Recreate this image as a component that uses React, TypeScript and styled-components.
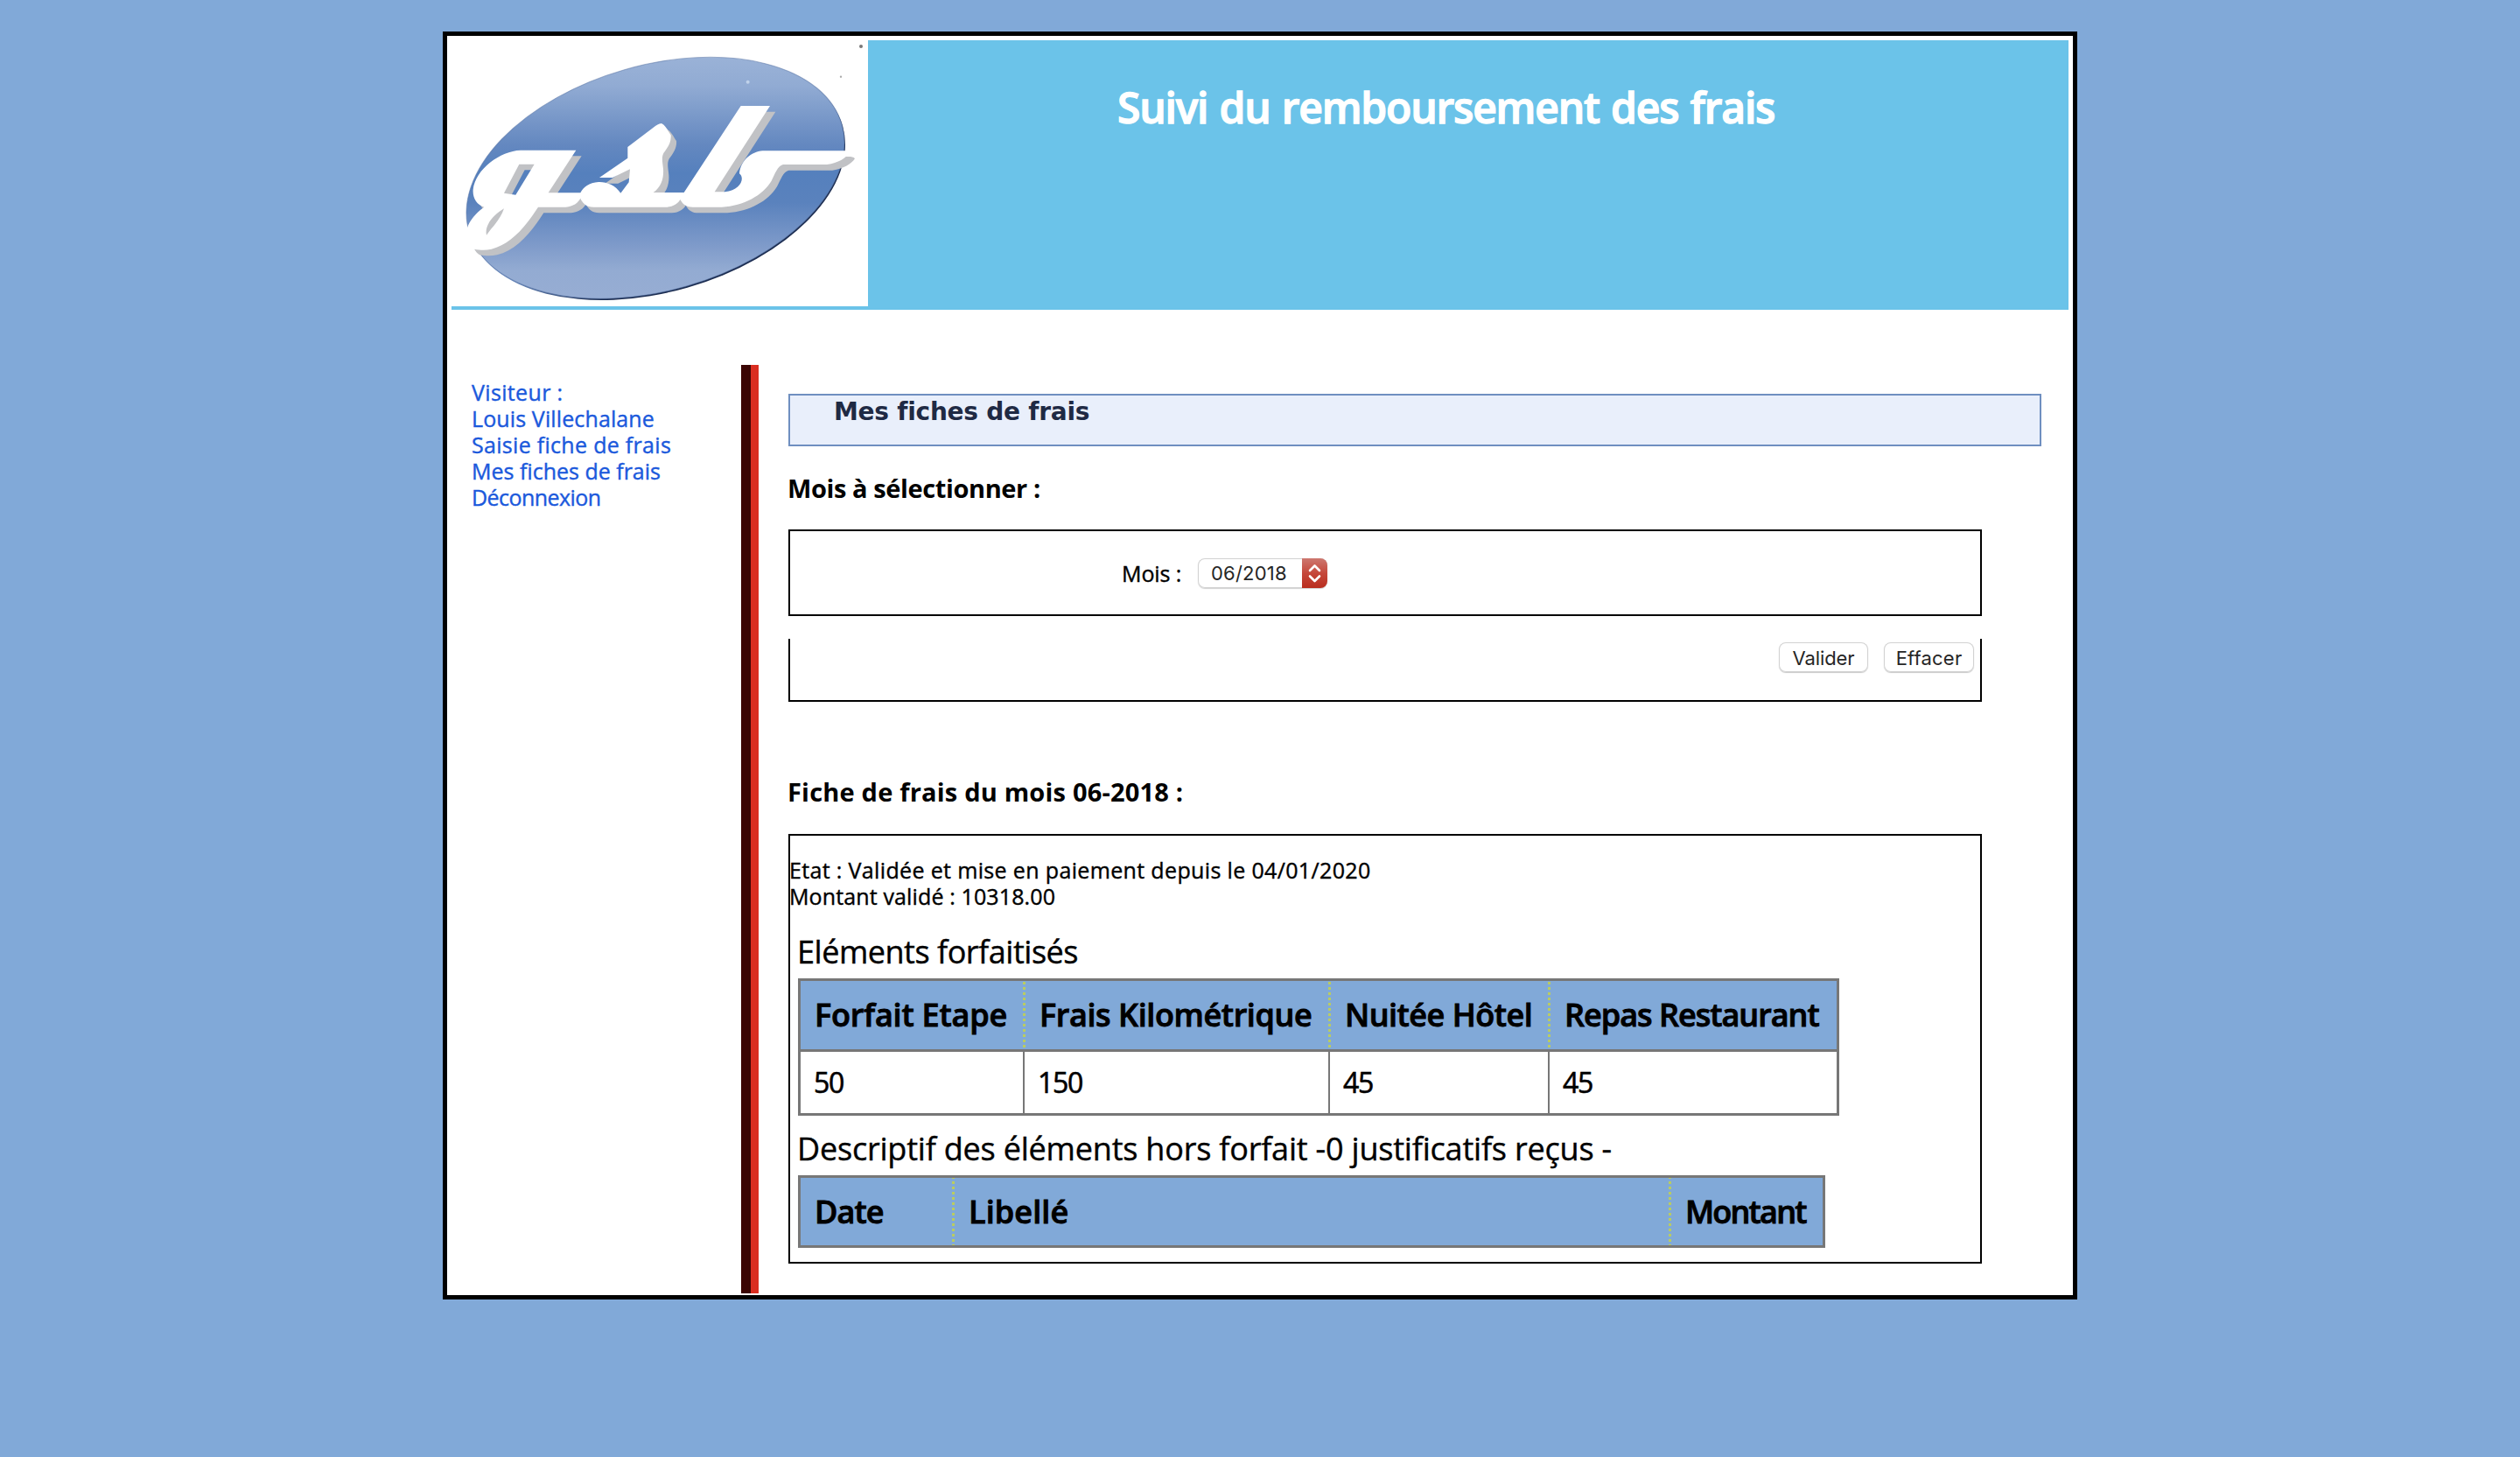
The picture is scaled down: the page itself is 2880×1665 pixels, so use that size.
import React from "react";
import styled, { createGlobalStyle } from "styled-components";

const sans = `"Open Sans", "Noto Sans", sans-serif`;
const system = `Inter, "Liberation Sans", sans-serif`;

const GlobalStyle = createGlobalStyle`
  *, *::before, *::after { box-sizing: border-box; }
  body {
    margin: 0;
    background: #81a9d8;
    color: #000;
    font-family: ${sans};
  }
`;

const Page = styled.div`
  width: 1868px;
  height: 1449px;
  margin: 36px auto 0;
  padding: 5px;
  border: 5px solid #000;
  background: #fff;
`;

const Header = styled.header`
  display: flex;
  align-items: flex-start;
  height: 308px;
  margin-bottom: 63px;
  background: #6bc3e9;
`;

const LogoSvg = styled.svg`
  display: block;
  flex: none;
  width: 476px;
  height: 304px;
  background: #fff;
`;

const SiteTitle = styled.h1`
  margin: 47px 0 0;
  padding-left: 285px;
  color: #fff;
  font-size: 48px;
  line-height: 60px;
  font-weight: 600;
  letter-spacing: -1.2px;
  word-spacing: 2px;
  white-space: nowrap;
  -webkit-text-stroke: 1.3px #fff;
`;

const Columns = styled.div`
  display: flex;
  height: 1061px;
`;

const Sidebar = styled.nav`
  width: 331px;
  padding: 16px 0 0 23px;
`;

const MenuItem = styled.div<{ $spacing: number }>`
  color: #1b59dc;
  font-size: 25px;
  line-height: 30px;
  letter-spacing: ${(p) => p.$spacing}px;
  white-space: nowrap;
  -webkit-text-stroke: 0.4px;
`;

const Divider = styled.div`
  width: 20px;
  border-left: 11px solid #3b0503;
  background: #da2e21;
`;

const Content = styled.main`
  display: flex;
  flex-direction: column;
  padding: 33px 0 0 34px;
`;

const SectionTitle = styled.h2`
  width: 1432px;
  height: 60px;
  margin: 0 0 30px;
  padding: 4px 0 0 50px;
  border: 2px solid #6f8fc0;
  background: #e9effb;
  color: #1f2a44;
  font: 700 28px/30px "DejaVu Sans", Verdana, sans-serif;
  letter-spacing: -0.25px;
`;

const SubTitle = styled.h3<{ $spacing: number }>`
  margin: 0 0 0 -1px;
  font-size: 29px;
  line-height: 36px;
  font-weight: 700;
  letter-spacing: ${(p) => p.$spacing}px;
`;

const MonthBox = styled.div`
  display: flex;
  align-items: flex-start;
  width: 1364px;
  height: 99px;
  margin: 29px 0 26px;
  padding: 31px 0 0 379px;
  border: 2px solid #000;
`;

const Label = styled.label`
  width: 87px;
  margin-top: 2px;
  font-size: 25px;
  line-height: 30px;
  letter-spacing: -0.1px;
  -webkit-text-stroke: 0.4px;
`;

const Select = styled.div`
  display: flex;
  width: 148px;
  height: 34px;
  padding-left: 15px;
  overflow: hidden;
  border-radius: 8px;
  background: #fff;
  box-shadow: inset 0 0 0 1px #d2d2d2, 0 1px 1px rgba(0, 0, 0, 0.18);
  color: #262626;
  font: 22px/34px ${system};
`;

const SelectValue = styled.span`
  flex: 1;
  letter-spacing: 0.2px;
`;

const SelectArrows = styled.svg`
  width: 29px;
  height: 34px;
  background: linear-gradient(#cd7870, #c5483b 50%, #b92d1e);
`;

const ActionsBox = styled.div`
  display: flex;
  align-items: flex-start;
  justify-content: flex-end;
  gap: 18px;
  width: 1364px;
  height: 72px;
  margin-bottom: 85px;
  padding: 4px 7px 0 0;
  border: solid #000;
  border-width: 0 2px 2px;
`;

const Button = styled.button<{ $width: number; $spacing: number }>`
  width: ${(p) => p.$width}px;
  height: 34px;
  padding: 2px 0 0;
  border: 0;
  border-radius: 8px;
  background: #fff;
  box-shadow: inset 0 0 0 1px #d2d2d2, 0 1px 1px rgba(0, 0, 0, 0.22);
  color: #262626;
  font: 22px/32px ${system};
  letter-spacing: ${(p) => p.$spacing}px;
`;

const SheetBox = styled.section`
  display: flex;
  flex-direction: column;
  width: 1364px;
  height: 491px;
  margin-top: 30px;
  padding-top: 24px;
  border: 2px solid #000;
`;

const StateLine = styled.div<{ $spacing: number }>`
  margin-left: -1px;
  font-size: 25px;
  line-height: 30px;
  letter-spacing: ${(p) => p.$spacing}px;
  -webkit-text-stroke: 0.4px;
`;

const Caption = styled.div<{ $top: number; $spacing: number }>`
  margin: ${(p) => p.$top}px 0 8px 8px;
  font-size: 36px;
  line-height: 44px;
  letter-spacing: ${(p) => p.$spacing}px;
  -webkit-text-stroke: 0.4px;
`;

const Table = styled.div<{ $columns: string; $width: number }>`
  display: grid;
  grid-template-columns: ${(p) => p.$columns};
  width: ${(p) => p.$width}px;
  margin-left: 9px;
  border: 3px solid #777;
`;

const HeadCell = styled.div<{ $height: number; $spacing: number; $phase: number }>`
  height: ${(p) => p.$height}px;
  padding-left: 19px;
  background: #81a9d8;
  font-size: 36px;
  line-height: ${(p) => p.$height}px;
  font-weight: 600;
  letter-spacing: ${(p) => p.$spacing}px;
  white-space: nowrap;
  -webkit-text-stroke: 0.9px #000;
  &:not(:first-child) {
    background:
      repeating-linear-gradient(transparent 0 3px, #81a9d8 3px 6px) 0 ${(p) => p.$phase}px / 3px 6px repeat-y,
      linear-gradient(#b9cc62, #b9cc62) 0 0 / 3px 100% no-repeat,
      #81a9d8;
  }
  &:first-child {
    padding-left: 16px;
  }
`;

const BodyCell = styled.div`
  height: 73px;
  padding-left: 17px;
  border-top: 3px solid #777;
  font-size: 32px;
  line-height: 69px;
  letter-spacing: -1.3px;
  -webkit-text-stroke: 0.6px;
  & + & {
    background: linear-gradient(#777, #777) 0 0 / 2px 100% no-repeat;
  }
  ${HeadCell} + & {
    padding-left: 15px;
    background: none;
  }
`;

const menu = [
  { label: "Visiteur :", spacing: 0.35 },
  { label: "Louis Villechalane", spacing: 0.12 },
  { label: "Saisie fiche de frais", spacing: 0.3 },
  { label: "Mes fiches de frais", spacing: 0 },
  { label: "Déconnexion", spacing: -0.55 },
];

const packages = [
  { label: "Forfait Etape", value: "50", spacing: -0.2 },
  { label: "Frais Kilométrique", value: "150", spacing: -0.4 },
  { label: "Nuitée Hôtel", value: "45", spacing: -0.5 },
  { label: "Repas Restaurant", value: "45", spacing: -1 },
];

const extras = [
  { label: "Date", spacing: -0.9 },
  { label: "Libellé", spacing: 0.1 },
  { label: "Montant", spacing: -1.8 },
];

const letters =
  "M475 425H285C215 427 130 490 122 560C120 590 135 612 160 620C130 640 95 680 100 715C102 740 112 755 125 764C150 768 165 768 185 764C250 748 300 690 345 620H440C465 618 482 605 490 590C498 608 512 620 535 620H785C810 618 824 608 832 594C842 612 855 620 875 620H975C1050 615 1115 580 1145 530C1158 505 1165 480 1185 474H1335C1375 468 1400 452 1412 434C1408 428 1400 427 1390 427H1115C1075 430 1040 460 1035 505C1055 520 1040 562 985 568H950L1140 273H1040L845 570H740C768 550 776 520 774 490C772 465 765 445 780 428C792 412 802 395 800 373C790 358 782 340 768 333C758 333 750 340 742 346L652 414V452L555 519H600L660 490L656 535L628 572C610 545 580 533 552 534C520 536 500 552 490 571H380Z" +
  "M280 473L228 572L268 578L332 473Z" +
  "M228 625C195 645 160 680 168 716C185 690 215 665 228 625Z";

function Logo() {
  return (
    <LogoSvg viewBox="48 48 1428 912" preserveAspectRatio="none">
      <defs>
        <linearGradient id="shade" gradientUnits="userSpaceOnUse" x1="0" y1="105" x2="0" y2="937">
          <stop offset="0" stopColor="#9ab2d7" />
          <stop offset="0.12" stopColor="#91abd3" />
          <stop offset="0.36" stopColor="#6488c0" />
          <stop offset="0.48" stopColor="#5580bd" />
          <stop offset="0.6" stopColor="#5a82bd" />
          <stop offset="0.78" stopColor="#7f9bca" />
          <stop offset="0.88" stopColor="#93abd2" />
          <stop offset="1" stopColor="#97add3" />
        </linearGradient>
        <linearGradient id="rim" gradientUnits="userSpaceOnUse" x1="-300" y1="-300" x2="100" y2="300">
          <stop offset="0.35" stopColor="#6d8fc4" />
          <stop offset="0.75" stopColor="#1b2c50" />
        </linearGradient>
        <clipPath id="oval">
          <ellipse rx="665" ry="386" transform="translate(747 520) rotate(-16)" />
        </clipPath>
      </defs>
      <ellipse rx="665" ry="386" transform="translate(750 525) rotate(-16)" fill="url(#rim)" />
      <rect x="90" y="90" width="1320" height="860" fill="url(#shade)" clipPath="url(#oval)" />
      <ellipse rx="665" ry="386" transform="translate(747 520) rotate(-16)" fill="none" stroke="#5b76a5" strokeOpacity="0.55" strokeWidth="3" />
      <path d={letters} transform="translate(19 20)" fill="#c1c2c5" fillRule="evenodd" />
      <path d={letters} fill="#fff" fillRule="evenodd" />
      <circle cx="1452" cy="69" r="6" fill="#777" />
      <circle cx="1383" cy="173" r="3.5" fill="#aaa" />
      <circle cx="1064" cy="191" r="6" fill="#c0d2ea" />
    </LogoSvg>
  );
}

export default function App() {
  return (
    <>
      <GlobalStyle />
      <Page>
        <Header>
          <Logo />
          <SiteTitle>Suivi du remboursement des frais</SiteTitle>
        </Header>
        <Columns>
          <Sidebar>
            {menu.map((m) => (
              <MenuItem key={m.label} $spacing={m.spacing}>{m.label}</MenuItem>
            ))}
          </Sidebar>
          <Divider />
          <Content>
            <SectionTitle>Mes fiches de frais</SectionTitle>
            <SubTitle $spacing={-0.4}>Mois à sélectionner :</SubTitle>
            <MonthBox>
              <Label>Mois :</Label>
              <Select>
                <SelectValue>06/2018</SelectValue>
                <SelectArrows viewBox="0 0 29 34" fill="none" stroke="#fff" strokeWidth="2.6" strokeLinecap="round" strokeLinejoin="round">
                  <path d="M9 14L14.5 8.5L20 14M9 20.500L14.5 26L20 20.5" />
                </SelectArrows>
              </Select>
            </MonthBox>
            <ActionsBox>
              <Button $width={102} $spacing={-0.1}>Valider</Button>
              <Button $width={103} $spacing={0.2}>Effacer</Button>
            </ActionsBox>
            <SubTitle $spacing={0.2}>Fiche de frais du mois 06-2018 :</SubTitle>
            <SheetBox>
              <StateLine $spacing={0.35}>Etat : Validée et mise en paiement depuis le 04/01/2020</StateLine>
              <StateLine $spacing={0.13}>Montant validé : 10318.00</StateLine>
              <Caption $top={27} $spacing={-0.47}>Eléments forfaitisés</Caption>
              <Table $columns="254px 349px 251px 330px" $width={1190}>
                {packages.map((p) => (
                  <HeadCell key={p.label} $height={78} $spacing={p.spacing} $phase={1}>{p.label}</HeadCell>
                ))}
                {packages.map((p) => (
                  <BodyCell key={p.label}>{p.value}</BodyCell>
                ))}
              </Table>
              <Caption $top={16} $spacing={-0.2}>Descriptif des éléments hors forfait -0 justificatifs reçus -</Caption>
              <Table $columns="173px 819px 176px" $width={1174}>
                {extras.map((e) => (
                  <HeadCell key={e.label} $height={77} $spacing={e.spacing} $phase={4}>{e.label}</HeadCell>
                ))}
              </Table>
            </SheetBox>
          </Content>
        </Columns>
      </Page>
    </>
  );
}
